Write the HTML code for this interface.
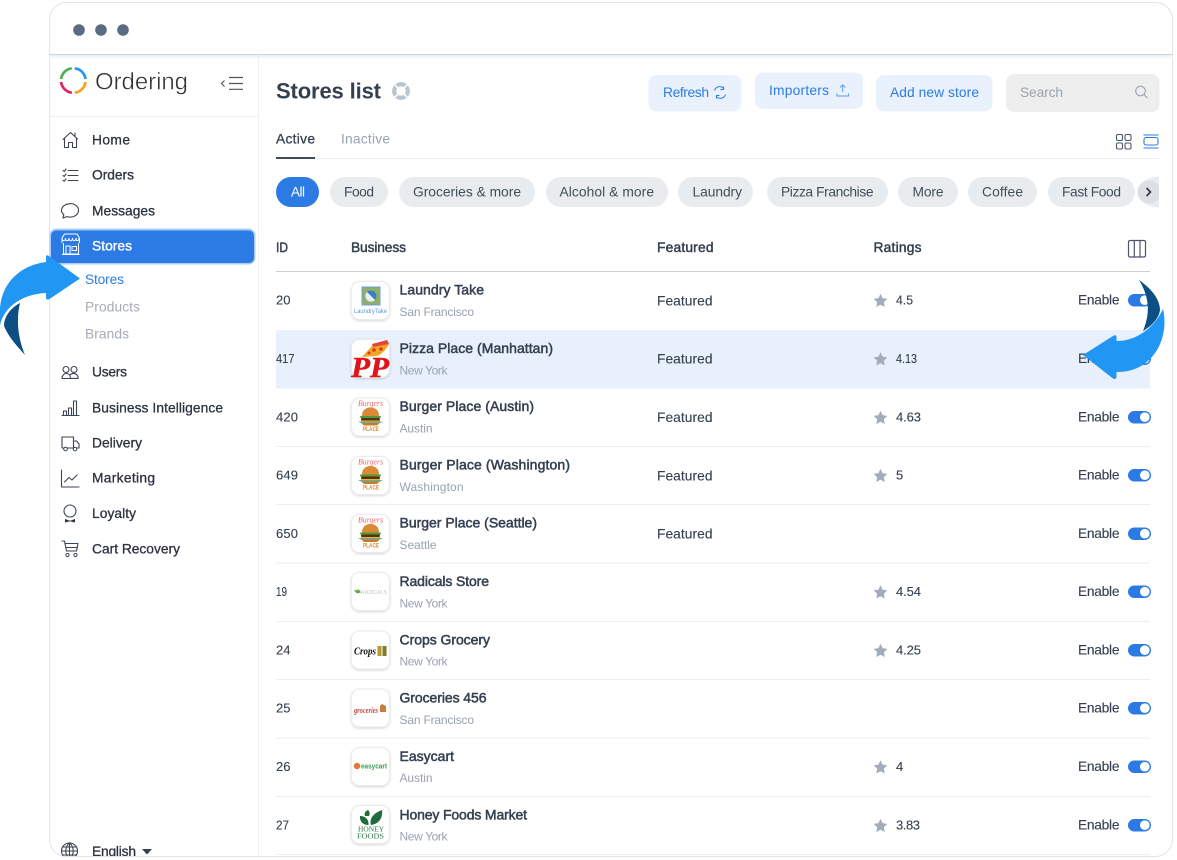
<!DOCTYPE html>
<html lang="en">
<head>
<meta charset="utf-8">
<title>Stores list</title>
<style>
html,body{margin:0;padding:0;background:#fff;width:1177px;height:860px;overflow:hidden}
svg{display:block;filter:blur(.3px)}
text{font-family:"Liberation Sans",sans-serif;font-size:13.8px;fill:#344050}
.m{stroke:#344050;stroke-width:.3}
.menu{fill:#2b3340;stroke:#2b3340;stroke-width:.3}
.name{font-size:14px;fill:#344050;stroke:#344050;stroke-width:.5}
.city{font-size:12px;fill:#98a2b3}
.head{fill:#344050;stroke:#344050;stroke-width:.45}
.btn{fill:#2c7be5;font-size:13.8px}
.chip{fill:#414d5c;font-size:13.8px}
.d{stroke:#344050;stroke-width:.12}
.n text{font-size:13px}
.i{fill:none;stroke:#3a4452;stroke-width:1.1;stroke-linecap:round;stroke-linejoin:round}
</style>
</head>
<body>
<svg width="1177" height="860" viewBox="0 0 1177 860" xmlns="http://www.w3.org/2000/svg">
<defs>
<filter id="sh" x="-20%" y="-20%" width="140%" height="140%"><feDropShadow dx="0" dy="1" stdDeviation="1.2" flood-color="#000" flood-opacity=".16"/></filter>
<clipPath id="win"><rect x="49" y="2" width="1124" height="854" rx="17"/></clipPath>
<clipPath id="chips"><rect x="276" y="170" width="883" height="45"/></clipPath>
<symbol id="burger" viewBox="0 0 39 39">
<path d="M11 18c0-6 4-8.500 8.500-8.500s8.500 2.500 8.500 8.500z" fill="#d98a35"/>
<rect x="9" y="18" width="21" height="2" rx="1" fill="#4f9a3d"/>
<rect x="10" y="20" width="19" height="2.500" rx="1" fill="#5b2f18"/>
<rect x="10" y="22.500" width="19" height="1.200" fill="#e5b52c"/>
<path d="M7 23.500h25l-4 2H11z" fill="#6fa98a"/>
<path d="M11 25h17c0 1.500-2 2.500-3 2.500H14c-1 0-3-1-3-2.500z" fill="#c97a2e"/>
</symbol>
<symbol id="star" viewBox="0 0 16 16"><path d="M8 .8l2.200 4.700 5.100.7-3.700 3.600.9 5.100L8 12.500l-4.500 2.400.9-5.100L.7 6.200l5.100-.7z" fill="#a3adba"/></symbol>
</defs>

<rect width="1177" height="860" fill="#fff"/>
<rect x="49.500" y="2.500" width="1123" height="854" rx="17" fill="#fff" stroke="#dfe5ea"/>

<g clip-path="url(#win)">
<!-- window bar -->
<rect x="49" y="55" width="1124" height="3" fill="#f3f5f7"/>
<rect x="49" y="54" width="1124" height="1.200" fill="#cfd7de"/>
<circle cx="79" cy="30" r="5.800" fill="#5b6b84"/>
<circle cx="101" cy="30" r="5.800" fill="#5b6b84"/>
<circle cx="123" cy="30" r="5.800" fill="#5b6b84"/>

<!-- sidebar -->
<rect x="258" y="55" width="1" height="805" fill="#eef0f2"/>
<rect x="49" y="116" width="209" height="1" fill="#eceff2"/>
<g fill="none" stroke-width="2.700">
<path d="M74.800 68.300A12.300 12.300 0 0 1 85.500 79" stroke="#2196f3"/>
<path d="M85.500 82A12.300 12.300 0 0 1 74.800 92.700" stroke="#f9a11b"/>
<path d="M71.800 92.700A12.300 12.300 0 0 1 61.100 82" stroke="#e91e63"/>
<path d="M61.100 79A12.300 12.300 0 0 1 71.800 68.300" stroke="#4caf50"/>
</g>
<text x="95" y="89.500" textLength="93" style="font-size:24px;fill:#333;stroke:#fff;stroke-width:.45">Ordering</text>
<g fill="none" stroke="#555" stroke-width="1.200"><path d="M224.500 80.500l-3 3 3 3"/><path d="M229 77.500h14M229 83.500h14M229 89.300h14"/></g>

<!-- Menu icons -->
<path class="i" d="M63 139.500l7.500-7 7 6.500M64.500 138v9.500h4v-5h4v5h4V138M75 133v3"/>
<path class="i" d="M63 170.500l1.200 1 1.800-2.500M63 175.500l1.200 1 1.800-2.500M63 180.300l1.200 1 1.800-2.500M68 170.500h10M68 175.500h10M68 180.500h10"/>
<path class="i" d="M70 203.500c4.700 0 8.500 2.900 8.500 6.800s-3.800 6.800-8.500 6.800c-1.100 0-2.100-.2-3.100-.5l-3.900 1.400.8-3.500c-1.500-1.200-2.300-2.500-2.300-3.900 0-3.900 3.800-6.800 8.500-6.800z"/>
<path class="i" d="M63 369.500a3 3 0 1 0 6 0a3 3 0 1 0-6 0M71 369.500a3 3 0 1 0 6 0a3 3 0 1 0-6 0M62 378.500c0-3 2-5 4.500-5s4 2 4 5zM70 375c1-1.200 2-1.600 3.500-1.600 2.700 0 4.700 2 4.700 5h-7.500"/>
<path class="i" d="M62 415.500h17M63.500 415v-4h3v4M68.500 415v-7h3v7M73.500 415v-14h3v14"/>
<path class="i" d="M62 437h11.500v11H62zM73.500 441h3l2.500 3v4h-5.500"/><circle cx="65.500" cy="449" r="1.800" fill="#fff" stroke="#3a4452"/><circle cx="75" cy="449" r="1.800" fill="#fff" stroke="#3a4452"/>
<path class="i" d="M61.500 470v17h17.500M64.500 482l4.500-4.500 3 2.500 5-5"/>
<circle cx="70" cy="511" r="6" class="i"/><path d="M65 519l4 1.500h2l4-1.500v3.500l-4-1h-2l-4 1z" fill="#2b3340"/>
<path class="i" d="M62 541h2.500l2 10h10l1.500-7.500H65M66.500 547.500h11"/><circle cx="67.500" cy="555" r="1.600" fill="#fff" stroke="#3a4452"/><circle cx="75.500" cy="555" r="1.600" fill="#fff" stroke="#3a4452"/>
<circle cx="69.500" cy="851" r="8" class="i"/><path class="i" d="M61.500 851h16M62.500 847h14M62.500 855h14M69.500 843v16M69.500 843c-5 4-5 12 0 16M69.500 843c5 4 5 12 0 16"/>

<!-- Menu -->
<text class="menu" x="92" y="144.500" textLength="38">Home</text>
<text class="menu" x="92" y="179.500" textLength="42">Orders</text>
<text class="menu" x="92" y="215.500" textLength="63">Messages</text>
<rect x="49.500" y="228.500" width="206" height="36" rx="7" fill="#a9cdf7"/>
<rect x="51" y="230.500" width="203" height="32.500" rx="5" fill="#2c7be5"/>
<path d="M62 243v-5l2.500-4h12.500l2.500 4v5M62 238c0 3.500 3.500 3.500 3.500 0c0 3.500 3.500 3.500 3.500 0c0 3.500 3.500 3.500 3.500 0c0 3.500 3.500 3.500 3.500 0c0 3.500 3 3.500 3 0M63.500 243v11h15v-11M62 254.500h17.500M66 254v-8h4v8M72 246.500h4.500v4H72z" fill="none" stroke="#fff" stroke-width="1"/>
<text x="92" y="250.500" textLength="40" style="fill:#fff;stroke:#fff;stroke-width:.35">Stores</text>
<text x="85" y="284" textLength="39" style="fill:#2c7be5">Stores</text>
<text x="85" y="311.500" textLength="55" style="fill:#a4acb9">Products</text>
<text x="85" y="338.500" textLength="44" style="fill:#a4acb9">Brands</text>
<text class="menu" x="92" y="376.500" textLength="35">Users</text>
<text class="menu" x="92" y="412.500" textLength="131">Business Intelligence</text>
<text class="menu" x="92" y="447.500" textLength="50">Delivery</text>
<text class="menu" x="92" y="482.500" textLength="63">Marketing</text>
<text class="menu" x="92" y="518" textLength="44">Loyalty</text>
<text class="menu" x="92" y="553.500" textLength="88">Cart Recovery</text>
<text class="menu" x="92" y="856" textLength="44">English</text>
<path d="M142 849h10l-5 5.500z" fill="#344050"/>

<!-- Title -->
<text x="276" y="98.500" textLength="105" style="font-size:22px;font-weight:bold;fill:#344050">Stores list</text>
<circle cx="401" cy="91" r="6.800" fill="none" stroke="#b9c5d1" stroke-width="4.200"/>
<path d="M394.800 84.800l3.400 3.400M407.200 84.800l-3.400 3.400M394.800 97.200l3.400-3.400M407.200 97.200l-3.400-3.400" stroke="#fff" stroke-width="1.600"/>

<!-- Actions -->
<rect x="648.500" y="75" width="93" height="36.500" rx="8" fill="#e9f1fd"/>
<text class="btn" x="663" y="97" textLength="46">Refresh</text>
<path d="M714.500 90.500a5.300 5.300 0 0 1 9.500-1.500M725.500 94.500a5.300 5.300 0 0 1-9.500 1.500M723.500 86.500v3h-3M716.500 98.500v-3h3" fill="none" stroke="#2c7be5" stroke-width="1"/>
<rect x="755" y="72.500" width="108" height="36.500" rx="8" fill="#e9f1fd"/>
<text class="btn" x="769" y="95" textLength="60">Importers</text>
<path d="M837 93.500v2.500h11.500v-2.500M842.700 92v-7M840 87.500l2.700-2.700 2.700 2.700" fill="none" stroke="#5d9bec" stroke-width="1"/>
<rect x="876" y="75" width="116.500" height="36.500" rx="8" fill="#e9f1fd"/>
<text class="btn" x="890" y="97" textLength="89">Add new store</text>
<rect x="1006" y="74" width="153.500" height="38" rx="8" fill="#eeeeee"/>
<text x="1020" y="97" textLength="43" style="fill:#9aa3af">Search</text>
<circle cx="1140.500" cy="91" r="4.800" fill="none" stroke="#9aa3af" stroke-width="1.100"/><path d="M1144 94.500l3.500 3.500" stroke="#9aa3af" stroke-width="1.100"/>

<!-- Tabs -->
<rect x="276" y="158" width="883" height="1" fill="#eceef0"/>
<text x="276" y="143.500" textLength="39" class="m">Active</text>
<text x="341" y="143.500" textLength="49" style="fill:#98a2b3">Inactive</text>
<rect x="276" y="157" width="39" height="2" fill="#3f4c5e"/>
<g fill="none" stroke="#4a5568" stroke-width="1.100"><rect x="1116.500" y="134.500" width="6" height="6" rx="1.500"/><rect x="1125" y="134.500" width="6" height="6" rx="1.500"/><rect x="1116.500" y="143" width="6" height="6" rx="1.500"/><rect x="1125" y="143" width="6" height="6" rx="1.500"/></g>
<g fill="none" stroke="#2c7be5" stroke-width="1.100"><rect x="1144" y="137.500" width="14" height="7.500" rx="2"/><path d="M1143.500 135h15M1143.500 148h15"/></g>

<!-- Chips -->
<g clip-path="url(#chips)">
<rect x="276" y="177" width="43" height="30" rx="15" fill="#2c7be5"/>
<text x="291" y="196.500" textLength="14" style="fill:#fff;font-size:13.5px">All</text>
<rect x="330" y="177" width="58" height="30" rx="15" fill="#e9ecef"/><text class="chip" x="344" y="196.500" textLength="30">Food</text>
<rect x="399" y="177" width="136" height="30" rx="15" fill="#e9ecef"/><text class="chip" x="413" y="196.500" textLength="108">Groceries &amp; more</text>
<rect x="546" y="177" width="122" height="30" rx="15" fill="#e9ecef"/><text class="chip" x="559.500" y="196.500" textLength="94.500">Alcohol &amp; more</text>
<rect x="678" y="177" width="75" height="30" rx="15" fill="#e9ecef"/><text class="chip" x="692.500" y="196.500" textLength="49.500">Laundry</text>
<rect x="767" y="177" width="121" height="30" rx="15" fill="#e9ecef"/><text class="chip" x="781" y="196.500" textLength="92.500">Pizza Franchise</text>
<rect x="898" y="177" width="60" height="30" rx="15" fill="#e9ecef"/><text class="chip" x="912.500" y="196.500" textLength="31">More</text>
<rect x="968" y="177" width="69" height="30" rx="15" fill="#e9ecef"/><text class="chip" x="982" y="196.500" textLength="41">Coffee</text>
<rect x="1048" y="177" width="87" height="30" rx="15" fill="#e9ecef"/><text class="chip" x="1062" y="196.500" textLength="59">Fast Food</text>
<rect x="1140" y="177" width="40" height="30" rx="15" fill="#e9ecef"/>
<circle cx="1149" cy="192" r="11.500" fill="#dcdfe3"/>
<path d="M1146.500 188l4 4-4 4" fill="none" stroke="#2d3540" stroke-width="1.600"/>
</g>

<!-- Table header -->
<text class="head" x="276" y="252" textLength="12" lengthAdjust="spacingAndGlyphs">ID</text>
<text class="head" x="351" y="252" textLength="55">Business</text>
<text class="head" x="657" y="252" textLength="56.500">Featured</text>
<text class="head" x="873.500" y="252" textLength="48">Ratings</text>
<g fill="none" stroke="#4a5568" stroke-width="1.200"><rect x="1128.500" y="240.500" width="17" height="16.500" rx="1.500"/><path d="M1134.300 240.500v16.500M1140 240.500v16.500"/></g>
<rect x="276" y="271" width="874" height="1" fill="#cfcfcf"/>

<!-- Rows bg/lines -->
<rect x="276" y="330" width="874" height="58.500" fill="#e8f0fc"/>
<g fill="#eceef0">
<rect x="276" y="446" width="874" height="1"/><rect x="276" y="504" width="874" height="1"/><rect x="276" y="562.500" width="874" height="1"/><rect x="276" y="621" width="874" height="1"/><rect x="276" y="679" width="874" height="1"/><rect x="276" y="737.500" width="874" height="1"/><rect x="276" y="796" width="874" height="1"/><rect x="276" y="854" width="874" height="1"/>
</g>

<!-- IDs -->
<g class="d n">
<text x="276" y="304.500" textLength="14.500">20</text>
<text x="276" y="363" textLength="18.500" lengthAdjust="spacingAndGlyphs">417</text>
<text x="276" y="421.500" textLength="22">420</text>
<text x="276" y="479.500" textLength="22">649</text>
<text x="276" y="538" textLength="22">650</text>
<text x="276" y="596" textLength="11" lengthAdjust="spacingAndGlyphs">19</text>
<text x="276" y="654.500" textLength="14.500">24</text>
<text x="276" y="712.500" textLength="14.500">25</text>
<text x="276" y="771" textLength="14.500">26</text>
<text x="276" y="829.500" textLength="13" lengthAdjust="spacingAndGlyphs">27</text>
</g>

<!-- Logo cards -->
<g fill="#fff" stroke="#e9ebee" filter="url(#sh)">
<rect x="351.500" y="281.500" width="38" height="38" rx="8"/><rect x="351.500" y="339.500" width="38" height="38" rx="8"/><rect x="351.500" y="398" width="38" height="38" rx="8"/><rect x="351.500" y="456.500" width="38" height="38" rx="8"/><rect x="351.500" y="514.500" width="38" height="38" rx="8"/><rect x="351.500" y="572.500" width="38" height="38" rx="8"/><rect x="351.500" y="631" width="38" height="38" rx="8"/><rect x="351.500" y="689" width="38" height="38" rx="8"/><rect x="351.500" y="747.500" width="38" height="38" rx="8"/><rect x="351.500" y="805.500" width="38" height="38" rx="8"/>
</g>

<!-- Laundry logo -->
<rect x="362" y="287" width="18" height="18" fill="#8fb06a" stroke="#6f9fd4"/>
<circle cx="371" cy="296" r="5.500" fill="#3c7fc4"/><path d="M367 292l8 8a5.500 5.500 0 0 1-8-8z" fill="#e8eef5"/>
<text x="354" y="313" textLength="33" lengthAdjust="spacingAndGlyphs" style="font-size:6.500px;fill:#5b9bd8">LaundryTake</text>
<!-- PP logo -->
<path d="M362 357l10-11 15-5 2 3c-3 6-7 10-12 12z" fill="#f5a623"/>
<path d="M372 344l15-4 2 4-16 3z" fill="#e2453a"/>
<circle cx="374" cy="350" r="1.800" fill="#d93a1f"/><circle cx="381" cy="349" r="1.800" fill="#d93a1f"/><circle cx="369" cy="353" r="1.500" fill="#d93a1f"/>
<text x="351" y="377" textLength="38" lengthAdjust="spacingAndGlyphs" style="font-size:29px;font-weight:bold;font-style:italic;fill:#e0141c;font-family:'Liberation Serif',serif;stroke:#e0141c;stroke-width:.5">PP</text>
<!-- Burgers -->
<text x="358" y="406" textLength="25" lengthAdjust="spacingAndGlyphs" style="font-size:8.500px;font-style:italic;fill:#ef6a6a;font-family:'Liberation Serif',serif">Burgers</text>
<use href="#burger" x="351" y="398" width="39" height="39"/>
<text x="363" y="431" textLength="16" lengthAdjust="spacingAndGlyphs" style="font-size:6px;font-weight:bold;fill:#d98a35">PLACE</text>
<text x="358" y="464.500" textLength="25" lengthAdjust="spacingAndGlyphs" style="font-size:8.500px;font-style:italic;fill:#ef6a6a;font-family:'Liberation Serif',serif">Burgers</text>
<use href="#burger" x="351" y="456.500" width="39" height="39"/>
<text x="363" y="489.500" textLength="16" lengthAdjust="spacingAndGlyphs" style="font-size:6px;font-weight:bold;fill:#d98a35">PLACE</text>
<text x="358" y="522.500" textLength="25" lengthAdjust="spacingAndGlyphs" style="font-size:8.500px;font-style:italic;fill:#ef6a6a;font-family:'Liberation Serif',serif">Burgers</text>
<use href="#burger" x="351" y="514.500" width="39" height="39"/>
<text x="363" y="547.500" textLength="16" lengthAdjust="spacingAndGlyphs" style="font-size:6px;font-weight:bold;fill:#d98a35">PLACE</text>
<!-- Radicals -->
<path d="M354 590.500l5-1 2 3-4 1z" fill="#6aa84f"/>
<text x="361" y="594" textLength="26" lengthAdjust="spacingAndGlyphs" style="font-size:5.500px;fill:#c4c8cc">RADICALS</text>
<!-- Crops -->
<text x="354" y="654.500" textLength="22" lengthAdjust="spacingAndGlyphs" style="font-size:11px;font-weight:bold;font-style:italic;fill:#111;font-family:'Liberation Serif',serif">Crops</text>
<rect x="377.500" y="646" width="4" height="10" fill="#b59a2c"/><rect x="382.500" y="646" width="4" height="10" fill="#7f7a2d"/>
<!-- Groceries -->
<text x="354" y="713" textLength="24" lengthAdjust="spacingAndGlyphs" style="font-size:8.500px;font-weight:bold;font-style:italic;fill:#c9473c;font-family:'Liberation Serif',serif">groceries</text>
<path d="M380 706l2-2 4 2v6h-6z" fill="#c77d3f"/>
<!-- Easycart -->
<circle cx="357" cy="766" r="3.200" fill="#e8772e"/>
<text x="361" y="768.500" textLength="26" lengthAdjust="spacingAndGlyphs" style="font-size:7px;font-weight:bold;fill:#3e9a52">easycart</text>
<!-- Honey -->
<path d="M371 825c-2-7 3-12 11-15 1 8-3 14-11 15zM368.500 825c-6 0-9-4-8.500-9 6 0 9 4 8.500 9zM365 816c-1-2 0-5 3-6 2 2 2 4 1 6z" fill="#1f6b3a"/>
<text x="358" y="831.500" textLength="26" lengthAdjust="spacingAndGlyphs" style="font-size:7.500px;fill:#2a7a48;font-family:'Liberation Serif',serif">HONEY</text>
<text x="357" y="838.500" textLength="27" lengthAdjust="spacingAndGlyphs" style="font-size:7.500px;fill:#2a7a48;font-family:'Liberation Serif',serif">FOODS</text>

<!-- Names -->
<text class="name" x="399.500" y="294.500" textLength="84.500">Laundry Take</text>
<text class="name" x="399.500" y="353" textLength="153.500">Pizza Place (Manhattan)</text>
<text class="name" x="399.500" y="411" textLength="134.500">Burger Place (Austin)</text>
<text class="name" x="399.500" y="469.500" textLength="170.500">Burger Place (Washington)</text>
<text class="name" x="399.500" y="527.500" textLength="137.500">Burger Place (Seattle)</text>
<text class="name" x="399.500" y="586" textLength="89.500">Radicals Store</text>
<text class="name" x="399.500" y="644.500" textLength="90.500">Crops Grocery</text>
<text class="name" x="399.500" y="702.500" textLength="87">Groceries 456</text>
<text class="name" x="399.500" y="761" textLength="54.500">Easycart</text>
<text class="name" x="399.500" y="819.500" textLength="127.500">Honey Foods Market</text>

<!-- Cities -->
<text class="city" x="399.500" y="316" textLength="74.500">San Francisco</text>
<text class="city" x="399.500" y="374.500" textLength="48">New York</text>
<text class="city" x="399.500" y="432.500" textLength="33">Austin</text>
<text class="city" x="399.500" y="491" textLength="64">Washington</text>
<text class="city" x="399.500" y="549" textLength="37">Seattle</text>
<text class="city" x="399.500" y="607.500" textLength="48">New York</text>
<text class="city" x="399.500" y="665.500" textLength="48">New York</text>
<text class="city" x="399.500" y="724" textLength="74.500">San Francisco</text>
<text class="city" x="399.500" y="782" textLength="33">Austin</text>
<text class="city" x="399.500" y="840.500" textLength="48">New York</text>

<g class="d">
<!-- Featured -->
<text x="657" y="305.500" textLength="55.500">Featured</text>
<text x="657" y="363.500" textLength="55.500">Featured</text>
<text x="657" y="422" textLength="55.500">Featured</text>
<text x="657" y="480.500" textLength="55.500">Featured</text>
<text x="657" y="538.500" textLength="55.500">Featured</text>

<!-- Enable -->
<text x="1078" y="304.500" textLength="41.500">Enable</text>
<text x="1078" y="363" textLength="41.500">Enable</text>
<text x="1078" y="421.500" textLength="41.500">Enable</text>
<text x="1078" y="479.500" textLength="41.500">Enable</text>
<text x="1078" y="538" textLength="41.500">Enable</text>
<text x="1078" y="596" textLength="41.500">Enable</text>
<text x="1078" y="654.500" textLength="41.500">Enable</text>
<text x="1078" y="712.500" textLength="41.500">Enable</text>
<text x="1078" y="771" textLength="41.500">Enable</text>
<text x="1078" y="829.500" textLength="41.500">Enable</text>
</g>

<!-- Ratings -->
<g class="d n">
<text x="896" y="304.500" textLength="17" lengthAdjust="spacingAndGlyphs">4.5</text>
<text x="896" y="363" textLength="21" lengthAdjust="spacingAndGlyphs">4.13</text>
<text x="896" y="421.500" textLength="25">4.63</text>
<text x="896" y="479.500" textLength="7">5</text>
<text x="896" y="596" textLength="25">4.54</text>
<text x="896" y="654.500" textLength="25">4.25</text>
<text x="896" y="771" textLength="7">4</text>
<text x="896" y="829.500" textLength="24">3.83</text>
</g>

<use href="#star" x="873" y="293" width="15" height="15"/>
<use href="#star" x="873" y="351.500" width="15" height="15"/>
<use href="#star" x="873" y="410" width="15" height="15"/>
<use href="#star" x="873" y="468" width="15" height="15"/>
<use href="#star" x="873" y="584.500" width="15" height="15"/>
<use href="#star" x="873" y="643" width="15" height="15"/>
<use href="#star" x="873" y="759.500" width="15" height="15"/>
<use href="#star" x="873" y="818" width="15" height="15"/>

<!-- Toggles -->
<g fill="#2c7be5">
<rect x="1128" y="294" width="23" height="12.500" rx="6.200"/><rect x="1128" y="352.500" width="23" height="12.500" rx="6.200"/><rect x="1128" y="411" width="23" height="12.500" rx="6.200"/><rect x="1128" y="469" width="23" height="12.500" rx="6.200"/><rect x="1128" y="527.500" width="23" height="12.500" rx="6.200"/><rect x="1128" y="585.500" width="23" height="12.500" rx="6.200"/><rect x="1128" y="644" width="23" height="12.500" rx="6.200"/><rect x="1128" y="702" width="23" height="12.500" rx="6.200"/><rect x="1128" y="760.500" width="23" height="12.500" rx="6.200"/><rect x="1128" y="819" width="23" height="12.500" rx="6.200"/>
</g>
<g fill="#fff">
<circle cx="1144.800" cy="300.200" r="4.800"/><circle cx="1144.800" cy="358.700" r="4.800"/><circle cx="1144.800" cy="417.200" r="4.800"/><circle cx="1144.800" cy="475.200" r="4.800"/><circle cx="1144.800" cy="533.700" r="4.800"/><circle cx="1144.800" cy="591.700" r="4.800"/><circle cx="1144.800" cy="650.200" r="4.800"/><circle cx="1144.800" cy="708.200" r="4.800"/><circle cx="1144.800" cy="766.700" r="4.800"/><circle cx="1144.800" cy="825.200" r="4.800"/>
</g>
</g>

<!-- Left arrow -->
<path d="M20 303C9 309 4 318 4 326C9 338 18 347 25 355C18 338 16 320 20 303z" fill="#0b4f85"/>
<path d="M80 278.500L49 256q-3-2-3 1.500V262C21 265 0 283 0 312V325C5 305 24 294 46 293v4q0 4 3.500 2z" fill="#2196f3"/>

<!-- Right arrow -->
<path d="M1139 280C1150 288 1159 297 1160 309C1160 317 1152 326 1143 331C1150 314 1150 298 1139 280z" fill="#0b4f85"/>
<path d="M1083 355L1113 336q3.500-2 3.500 1.500V341C1138 341 1155 326 1163 309C1167 326 1163 346 1150 359C1141 368 1130 372 1116.500 372v4.500q0 3.500-3.500 2z" fill="#2196f3"/>
</svg>
</body>
</html>
